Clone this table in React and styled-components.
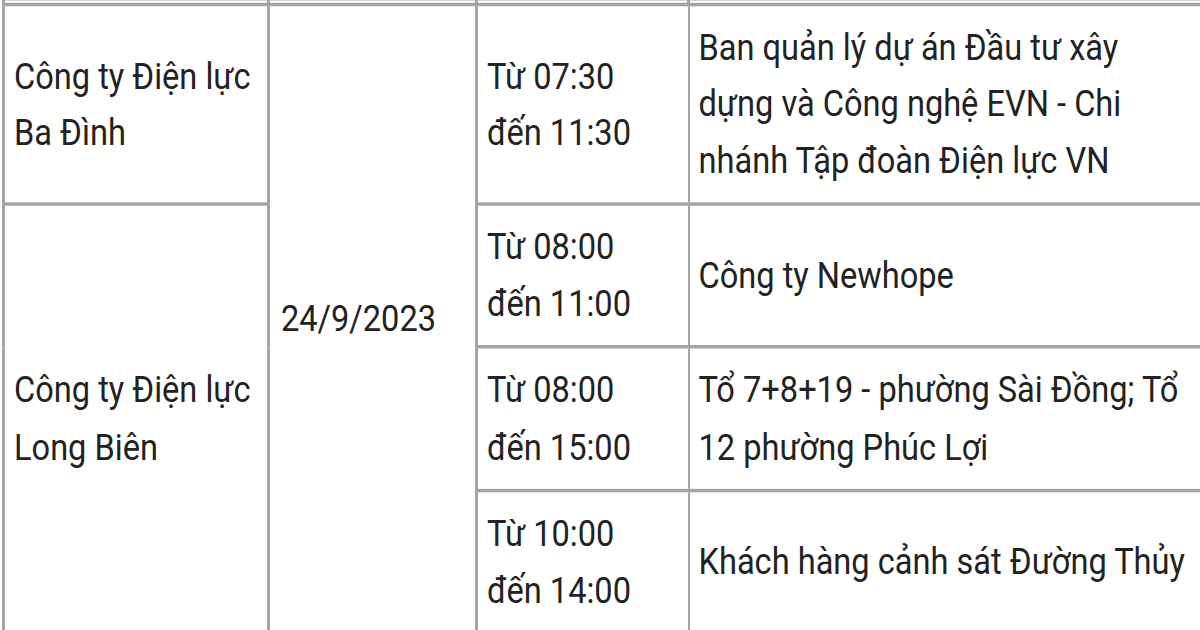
import styled, { createGlobalStyle } from 'styled-components'

const GlobalStyle = createGlobalStyle`
  html, body {
    margin: 0;
    padding: 0;
    background: #fff;
  }
  body {
    height: 100vh;
    overflow: hidden;
    font-family: Roboto, "Noto Sans", "Liberation Sans", sans-serif;
    color: #222;
  }
`

const schedule = [
  {
    company: ['Công ty Điện lực', 'Ba Đình'],
    slots: [
      { time: ['Từ 07:30', 'đến 11:30'], area: ['Ban quản lý dự án Đầu tư xây', 'dựng và Công nghệ EVN - Chi', 'nhánh Tập đoàn Điện lực VN'] },
    ],
  },
  {
    company: ['Công ty Điện lực', 'Long Biên'],
    slots: [
      { time: ['Từ 08:00', 'đến 11:00'], area: ['Công ty Newhope'] },
      { time: ['Từ 08:00', 'đến 15:00'], area: ['Tổ 7+8+19 - phường Sài Đồng; Tổ', '12 phường Phúc Lợi'] },
      { time: ['Từ 10:00', 'đến 14:00'], area: ['Khách hàng cảnh sát Đường Thủy'] },
    ],
  },
]

const date = '24/9/2023'

function Lines({ items }) {
  return items.map((line, i) => (
    <span key={i}>
      {line}
      {i < items.length - 1 && <br />}
    </span>
  ))
}

export default function App() {
  const totalSlots = schedule.reduce((n, g) => n + g.slots.length, 0)

  return (
    <>
      <GlobalStyle />
      <Stretch>
        <Table>
          <colgroup>
            <Col $w={265} />
            <Col $w={208} />
            <Col $w={212} />
            <Col $w={525} />
          </colgroup>
          <tbody>
            <PrevRow>
              <td /><td /><td /><td />
            </PrevRow>
            {schedule.map((group, gi) =>
              group.slots.map((slot, si) => (
                <tr key={`${gi}-${si}`}>
                  {si === 0 && (
                    <Cell rowSpan={group.slots.length}>
                      <Lines items={group.company} />
                    </Cell>
                  )}
                  {gi === 0 && si === 0 && (
                    <Cell rowSpan={totalSlots} $padLeft={11}>{date}</Cell>
                  )}
                  <Cell $thinRight>
                    <Lines items={slot.time} />
                  </Cell>
                  <Cell $thinLeft>
                    <Lines items={slot.area} />
                  </Cell>
                </tr>
              ))
            )}
          </tbody>
        </Table>
      </Stretch>
    </>
  )
}

const Stretch = styled.div`
  transform: scaleY(1.16);
  transform-origin: 0 0;
`

const Table = styled.table`
  border-collapse: collapse;
  table-layout: fixed;
  width: 1210px;
  margin: -3px 0 0 2px;
  font-size: 32.6px;
  line-height: 49.1px;
`

const Col = styled.col`
  width: ${p => p.$w}px;
`

const PrevRow = styled.tr`
  td {
    height: 2px;
    padding: 0;
    border: 3px solid #a4a4a4;
  }
`

const Cell = styled.td`
  border: 3px solid #a4a4a4;
  ${p => p.$thinRight && 'border-right-width: 2px;'}
  ${p => p.$thinLeft && 'border-left-width: 2px;'}
  padding: 11px 10px 11px ${p => p.$padLeft ?? 9}px;
  vertical-align: middle;
  white-space: nowrap;
  overflow: hidden;
`
